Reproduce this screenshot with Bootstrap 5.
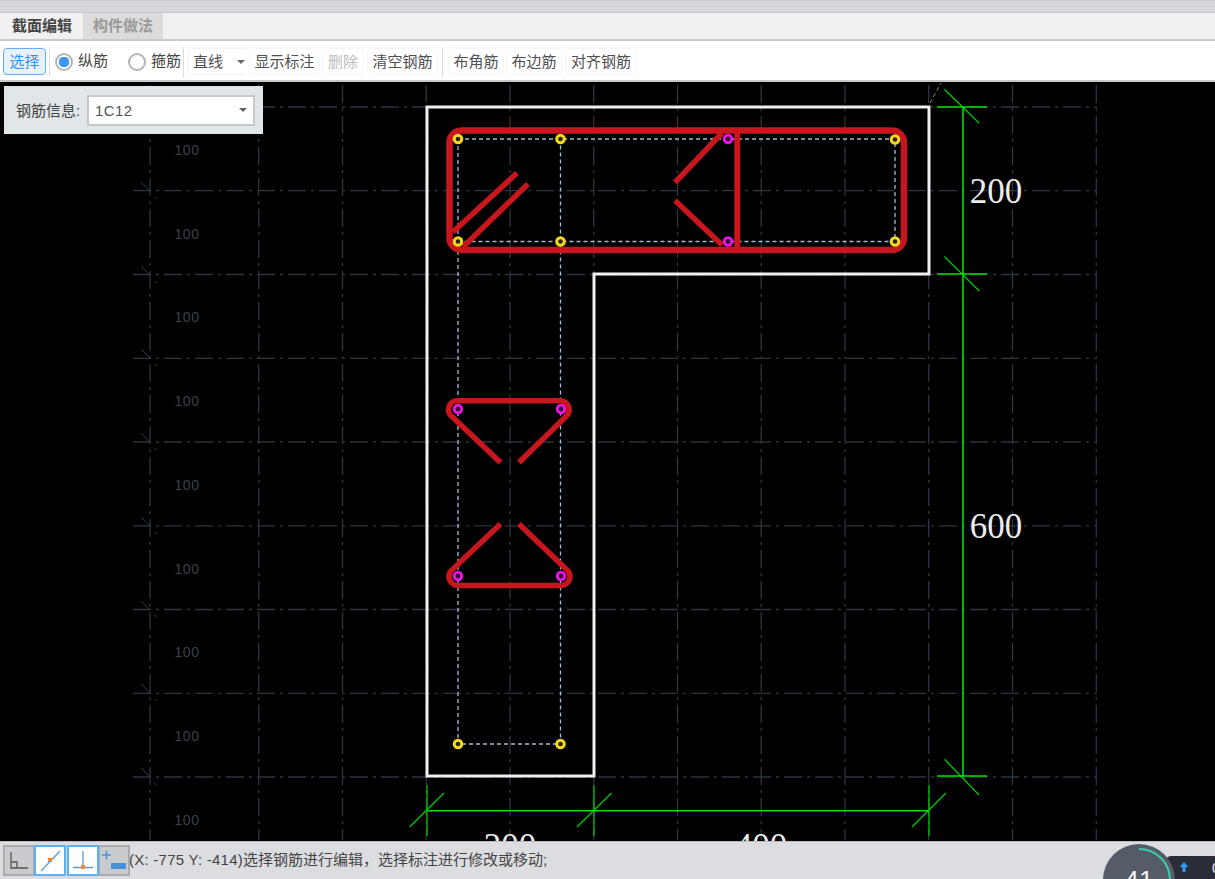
<!DOCTYPE html>
<html lang="zh">
<head>
<meta charset="utf-8">
<title>截面编辑</title>
<link href="https://cdn.jsdelivr.net/npm/bootstrap@5.3.0/dist/css/bootstrap.min.css" rel="stylesheet">
<style>
html,body{height:100%;overflow:hidden}
body{font-family:"Liberation Sans","Noto Sans CJK SC",sans-serif;font-size:15px;color:#444;background:#000}
.app-shell{height:879px}
.title-strip{height:13px;background:#d6d8dc;border-top:1px solid #c9cbd0;border-bottom:1px solid #c6c8cd;flex:none}
.tab-row{height:28px;background:#f1f1f1;border-bottom:2px solid #c9cacf;padding-left:2px;flex:none}
.tab-item{width:80px;height:26px;line-height:25px;text-align:center;font-weight:700;font-size:15px;color:#444;background:#f1f1f1;margin-right:1px}
.tab-off{background:#dcdcdc;color:#9a9a9a}
.tool-row{height:41px;background:#fff;border-bottom:2px solid #c9c9c9;padding:2px 0 0 3px;flex:none}
.tool-btn{--bs-btn-padding-x:0;--bs-btn-padding-y:0;--bs-btn-font-size:15px;--bs-btn-color:#505050;--bs-btn-border-color:#f6f6f6;--bs-btn-border-radius:4px;--bs-btn-disabled-color:#bdbdbd;--bs-btn-disabled-border-color:#f6f6f6;--bs-btn-disabled-opacity:1;height:27px;line-height:25px;white-space:nowrap}
.tool-sel{width:43px;--bs-btn-color:#fff;--bs-btn-bg:#e7f2fd;--bs-btn-border-color:#66aef2;color:#3b8fe3;background:#e7f2fd}
.w-4c{width:71px}.w-3c{width:56px}.w-del{width:42px}.w-4d{width:72px}
.gap-l2{margin-left:2px}.gap-l3{margin-left:3px}
.tool-sep{width:1px;height:30px;background:#ddd;flex:none}
.sep-one{margin:0 5px 0 3px}
.sep-two{margin:0 4px 0 2px}
.sep-three{margin:0 5px 0 4px}
.tool-radio{display:flex;align-items:center;margin:0;padding:0;min-height:0;font-size:15px;color:#444}
.radio-two{margin-left:20px}
.tool-radio .form-check-input{width:18px;height:18px;margin:0 5px 0 0;float:none;border:2px solid #b4b4b4;background-color:#fff;flex:none}
.tool-radio .form-check-input:checked{background-color:#fff;border-color:#b4b4b4;background-image:radial-gradient(circle,#3f97f5 0,#3f97f5 5px,transparent 5.5px)}
.line-pick{width:58px;height:27px;padding:0 1px 0 4px;font-size:15px;color:#505050;border:1px solid #f3f3f3;border-right:0;border-radius:4px 0 0 4px;background:#fff;line-height:25px}
.caret-mark{display:inline-block;width:0;height:0;border:4px solid transparent;border-top-color:#666;border-bottom:0}
.canvas-pane{flex:1 1 auto;min-height:0;background:#000;position:relative;overflow:hidden}
.canvas-pane svg{display:block}
.bar-panel{position:absolute;left:4px;top:4px;width:259px;height:48px;background:#e1e7e9;padding:2px 8px 0 12px;font-size:15px;color:#444}
.rebar-select{width:168px;height:31px;background:#fff;border:2px solid #c5c9c9;padding:0 6px;color:#555;letter-spacing:.4px;margin-top:-2px}
.rebar-value{position:relative;top:1px}
.status-row{height:38px;flex:none;background:#dcdde0;padding-left:3px;position:relative;overflow:hidden;border-top:1px solid #bbb;font-size:15px;color:#444}
.snap-btn{width:32px;height:31px;padding:0;background:#c9cbce;border:2px solid #a9abad;margin-right:-1px;border-radius:0;display:flex;align-items:center;justify-content:center}
.snap-on{background:#fff;border-color:#5bb2f7;position:relative;z-index:1}
.snap-next{margin-left:2px}
.status-text{margin-left:0;white-space:nowrap}
.coord-part{letter-spacing:.25px}
.gauge-dial{position:absolute;left:1103px;top:2px;width:72px;height:72px;z-index:2}
.net-pill{position:absolute;left:1165px;top:14px;width:60px;height:40px;background:#2a2d38;border-radius:6px 0 0 0}
.net-arrow{position:absolute;left:1179px;top:20px;z-index:3}
.net-figure{position:absolute;left:1212px;top:18px;color:#eee;font-size:14px;line-height:16px;z-index:3}
</style>
</head>
<body>
<div class="app-shell d-flex flex-column">
  <div class="title-strip"></div>
  <div class="tab-row d-flex">
    <div class="tab-item">截面编辑</div>
    <div class="tab-item tab-off">构件做法</div>
  </div>
  <div class="tool-row d-flex align-items-center">
    <button type="button" class="btn tool-btn tool-sel">选择</button>
    <span class="tool-sep sep-one"></span>
    <label class="form-check tool-radio"><input class="form-check-input" type="radio" name="barkind" checked>纵筋</label>
    <label class="form-check tool-radio radio-two"><input class="form-check-input" type="radio" name="barkind">箍筋</label>
    <span class="tool-sep sep-two"></span>
    <div class="line-pick d-flex align-items-center justify-content-between">直线<span class="caret-mark"></span></div>
    <button type="button" class="btn tool-btn w-4c gap-l3">显示标注</button>
    <button type="button" class="btn tool-btn w-del gap-l2" disabled>删除</button>
    <button type="button" class="btn tool-btn w-4c gap-l3">清空钢筋</button>
    <span class="tool-sep sep-three"></span>
    <button type="button" class="btn tool-btn w-3c">布角筋</button>
    <button type="button" class="btn tool-btn w-3c gap-l2">布边筋</button>
    <button type="button" class="btn tool-btn w-4d gap-l3">对齐钢筋</button>
  </div>
  <div class="canvas-pane">
    <svg width="1215" height="759" viewBox="0 82 1215 759" role="img" aria-label="钢筋截面图">
      <g stroke="#2d3541" stroke-width="1.3" stroke-dasharray="18 5 3 5" fill="none">
        <path d="M133 107H1097M133 190.7H1097M133 274.5H1097M133 358.3H1097M133 442H1097M133 525.8H1097M133 609.5H1097M133 693.3H1097M133 777H1097"/>
        <path d="M150 85V840M258.7 85V840M342.5 85V840M426.2 85V840M510 85V840M593.7 85V840M677.5 85V840M761.2 85V840M845 85V840M928.7 85V840M1012.5 85V840M1096.3 85V840"/>
      </g>
      <path stroke="#2d3541" fill="none" d="M141 182L150 191M154 197L157 199M141 266L150 275M154 281L157 283M141 349L150 358M154 364L157 366M141 433L150 442M154 448L157 450M141 517L150 526M154 532L157 534M141 601L150 610M154 615L157 617M141 684L150 693M154 699L157 701M141 768L150 777M154 783L157 785"/>
      <g fill="#3a424e" font-family="Liberation Sans,sans-serif" font-size="14" letter-spacing=".6" text-anchor="middle">
        <text x="187" y="155">100</text><text x="187" y="239">100</text><text x="187" y="322">100</text><text x="187" y="406">100</text><text x="187" y="490">100</text><text x="187" y="574">100</text><text x="187" y="657">100</text><text x="187" y="741">100</text><text x="187" y="825">100</text>
      </g>
      <path d="M930 103L941 83" stroke="#8a8a8a" stroke-dasharray="4 3" fill="none"/>
      <path d="M427 107H929V274H594V776H427Z" fill="none" stroke="#f0f0f0" stroke-width="3"/>
      <g stroke="#9dbcd8" stroke-width="1.3" stroke-dasharray="4 3" fill="none">
        <path d="M458 139H895V241.5H458M458 139V744H560.5V139"/>
      </g>
      <g stroke="#c8161e" fill="none" stroke-linejoin="round">
        <rect x="449.5" y="130.5" width="454.5" height="119.5" rx="12" stroke-width="6.500"/>
        <path d="M453 232L517 173M463 247L528 184" stroke-width="5.500"/>
        <path d="M737.300 132V250" stroke-width="6"/>
        <path d="M675 182.500L722 133M675 200.500L722 245" stroke-width="5.500"/>
        <path d="M500.500 462.500L453 417.500A9 9 0 0 1 458 400.700H561A9 9 0 0 1 567 415.500L519 462.500" stroke-width="5.500"/>
        <path d="M500.500 524L453 569A9 9 0 0 0 458 585.500H561A9 9 0 0 0 566 569L519 524" stroke-width="5.500"/>
      </g>
      <g stroke="#f4d81f" stroke-width="3" fill="#26261a">
        <circle cx="458" cy="139" r="3.800"/><circle cx="560.500" cy="139" r="3.800"/><circle cx="458" cy="241.500" r="3.800"/><circle cx="560.500" cy="241.500" r="3.800"/><circle cx="895" cy="139.500" r="3.800"/><circle cx="895" cy="241.500" r="3.800"/><circle cx="458" cy="744" r="3.800"/><circle cx="560.500" cy="744" r="3.800"/>
      </g>
      <g stroke="#f010e8" stroke-width="2.800" fill="#241c28">
        <circle cx="728" cy="139" r="3.800"/><circle cx="728" cy="241.500" r="3.800"/><circle cx="458" cy="409" r="3.800"/><circle cx="561" cy="409" r="3.800"/><circle cx="458" cy="576" r="3.800"/><circle cx="561" cy="576" r="3.800"/>
      </g>
      <g stroke="#00c800" stroke-width="1.300" fill="none">
        <path d="M944.300 89.300L979.300 123.300M944.300 256.500L979.300 291M944.600 759.300L979 795"/>
        <path d="M409.600 827L444 793M577 827L611.600 793M912 827L946 793"/>
        <path d="M427 785V836M594 785V836M929 785V836"/>
      </g>
      <g stroke="#00e000" stroke-width="1.600" fill="none">
        <path d="M963 107V776M937 107H987M937 274H987M937 776H987"/>
        <path d="M427 810.700H929"/>
      </g>
      <g fill="#ececec" font-family="Liberation Serif,serif" font-size="35" text-anchor="middle">
        <text x="996" y="203">200</text><text x="996" y="538">600</text><text x="510" y="858">200</text><text x="761" y="858">400</text>
      </g>
    </svg>
    <div class="bar-panel d-flex align-items-center justify-content-between">
      <span>钢筋信息:</span>
      <div class="rebar-select d-flex align-items-center justify-content-between"><span class="rebar-value">1C12</span><span class="caret-mark"></span></div>
    </div>
  </div>
  <div class="status-row d-flex align-items-center">
    <div class="snap-btn">
      <svg width="24" height="22" viewBox="0 0 24 22" fill="none" stroke="#555" stroke-width="1.3"><path d="M4 2V18H21M4 12H10V18"/></svg>
    </div>
    <div class="snap-btn snap-on">
      <svg width="24" height="24" viewBox="0 0 24 24" fill="none"><path d="M3 22L22 2" stroke="#5b9bd5" stroke-width="1.3"/><rect x="10" y="9" width="4" height="4" fill="#ee8a3a"/></svg>
    </div>
    <div class="snap-btn snap-on snap-next">
      <svg width="24" height="24" viewBox="0 0 24 24" fill="none" stroke="#5b9bd5" stroke-width="1.3"><path d="M2 18.500H22M12 2V18"/><rect x="10" y="16" width="4" height="4" fill="#ee8a3a" stroke="none"/></svg>
    </div>
    <div class="snap-btn">
      <svg width="26" height="24" viewBox="0 0 26 24" fill="none"><path d="M1 6H10M5.500 1.500V10.500" stroke="#4a90d9" stroke-width="1.400"/><rect x="10" y="14" width="15" height="6" fill="#4a90d9"/></svg>
    </div>
    <span class="status-text"><span class="coord-part">(X: -775 Y: -414)</span>选择钢筋进行编辑，选择标注进行修改或移动;</span>
    <div class="net-pill"></div>
    <svg class="gauge-dial" viewBox="0 0 72 72" role="img" aria-label="41">
      <circle cx="36" cy="36" r="36" fill="#565b68"/>
      <path d="M36 5A31 31 0 0 1 67 36" fill="none" stroke="#39cfae" stroke-width="2"/>
      <text x="36" y="45" font-family="Liberation Sans,sans-serif" font-size="26" fill="#f0f0f0" text-anchor="middle">41</text>
    </svg>
    <svg class="net-arrow" width="10" height="10" viewBox="0 0 10 10"><path d="M5 0L9.500 5H6.500V10H3.500V5H.5Z" fill="#2f9df4"/></svg>
    <span class="net-figure">0</span>
  </div>
</div>
<script src="https://cdn.jsdelivr.net/npm/bootstrap@5.3.0/dist/js/bootstrap.bundle.min.js"></script>
</body>
</html>
